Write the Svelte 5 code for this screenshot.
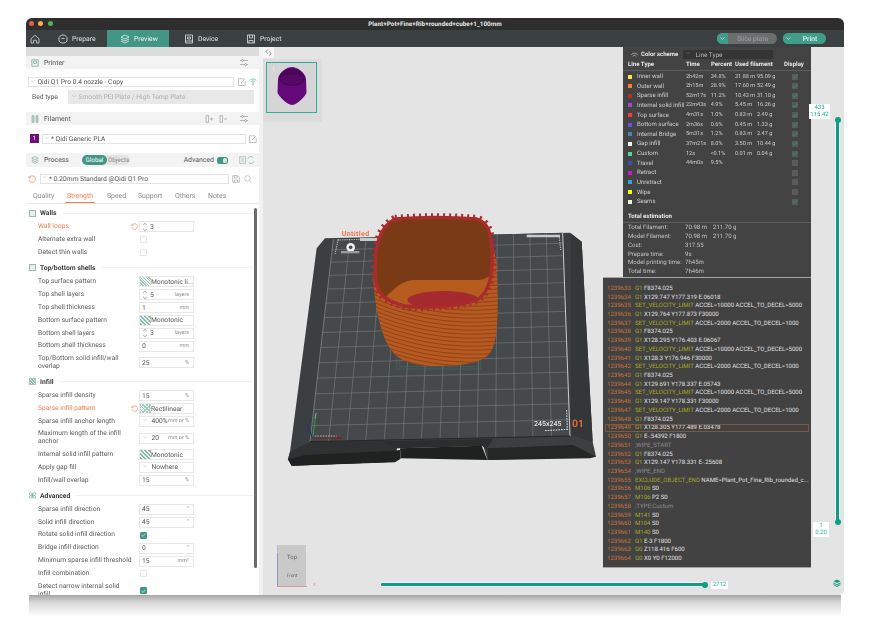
<script>
  const sections = [
    { title: 'Walls', icon: 'box', rows: [
      { label: 'Wall loops', val: '3', spin: true, mod: true },
      { label: 'Alternate extra wall', check: false },
      { label: 'Detect thin walls', check: false }
    ]},
    { title: 'Top/bottom shells', icon: 'box', rows: [
      { label: 'Top surface pattern', val: 'Monotonic li...', hatch: 'a' },
      { label: 'Top shell layers', val: '5', spin: true, unit: 'layers' },
      { label: 'Top shell thickness', val: '1', unit: 'mm' },
      { label: 'Bottom surface pattern', val: 'Monotonic', hatch: 'b' },
      { label: 'Bottom shell layers', val: '3', spin: true, unit: 'layers' },
      { label: 'Bottom shell thickness', val: '0', unit: 'mm' },
      { label: 'Top/Bottom solid infill/wall overlap', val: '25', unit: '%', two: true }
    ]},
    { title: 'Infill', icon: 'hatch', rows: [
      { label: 'Sparse infill density', val: '15', unit: '%' },
      { label: 'Sparse infill pattern', val: 'Rectilinear', hatch: 'c', mod: true },
      { label: 'Sparse infill anchor length', val: '400%', drop: true, unit: 'mm or %' },
      { label: 'Maximum length of the infill anchor', val: '20', drop: true, unit: 'mm or %', two: true },
      { label: 'Internal solid infill pattern', val: 'Monotonic', hatch: 'b' },
      { label: 'Apply gap fill', val: 'Nowhere', drop: true },
      { label: 'Infill/wall overlap', val: '15', unit: '%' }
    ]},
    { title: 'Advanced', icon: 'atom', rows: [
      { label: 'Sparse infill direction', val: '45', unit: '°' },
      { label: 'Solid infill direction', val: '45', unit: '°' },
      { label: 'Rotate solid infill direction', check: true },
      { label: 'Bridge infill direction', val: '0', unit: '°' },
      { label: 'Minimum sparse infill threshold', val: '15', unit: 'mm²' },
      { label: 'Infill combination', check: false },
      { label: 'Detect narrow internal solid infill', check: true, two: true }
    ]}
  ];
  const legend = [
    ['#ffe640','Inner wall','2h42m','34.8%','31.88 m','95.09 g',true],
    ['#ff7d38','Outer wall','2h15m','28.9%','17.60 m','52.49 g',true],
    ['#b03029','Sparse infill','52m17s','11.2%','10.43 m','31.10 g',true],
    ['#9a4bd0','Internal solid infill','22m43s','4.9%','5.45 m','16.26 g',true],
    ['#f93a3a','Top surface','4m31s','1.0%','0.83 m','2.49 g',true],
    ['#6a50e0','Bottom surface','2m36s','0.6%','0.45 m','1.33 g',true],
    ['#4d80ba','Internal Bridge','5m31s','1.2%','0.83 m','2.47 g',true],
    ['#ffffff','Gap infill','37m21s','8.0%','3.50 m','10.44 g',true],
    ['#5ed194','Custom','12s','<0.1%','0.01 m','0.04 g',true],
    ['#384fb2','Travel','44m0s','9.5%','','',false],
    ['#cd17cd','Retract','','','','',false],
    ['#31a6d0','Unretract','','','','',false],
    ['#ffff00','Wipe','','','','',false],
    ['#eeeeee','Seams','','','','',true]
  ];
  const totals = [
    ['Total Filament:','70.98 m','211.70 g'],
    ['Model Filament:','70.98 m','211.70 g'],
    ['Cost:','317.55',''],
    ['Prepare time:','9s',''],
    ['Model printing time:','7h45m',''],
    ['Total time:','7h46m','']
  ];
  const gcode = [
    ['G1','F8374.025'],['G1','X129.747 Y177.319 E.06018'],
    ['SET_VELOCITY_LIMIT','ACCEL=10000 ACCEL_TO_DECEL=5000'],['G1','X129.764 Y177.873 F30000'],
    ['SET_VELOCITY_LIMIT','ACCEL=2000 ACCEL_TO_DECEL=1000'],['G1','F8374.025'],
    ['G1','X128.295 Y176.403 E.06067'],['SET_VELOCITY_LIMIT','ACCEL=10000 ACCEL_TO_DECEL=5000'],
    ['G1','X128.3 Y176.946 F30000'],['SET_VELOCITY_LIMIT','ACCEL=2000 ACCEL_TO_DECEL=1000'],
    ['G1','F8374.025'],['G1','X129.691 Y178.337 E.05743'],
    ['SET_VELOCITY_LIMIT','ACCEL=10000 ACCEL_TO_DECEL=5000'],['G1','X129.147 Y178.331 F30000'],
    ['SET_VELOCITY_LIMIT','ACCEL=2000 ACCEL_TO_DECEL=1000'],['G1','F8374.025'],
    ['G1','X128.305 Y177.489 E.03478'],['G1','E-.54392 F1800'],
    [';WIPE_START',''],['G1','F8374.025'],['G1','X129.147 Y178.331 E-.25608'],
    [';WIPE_END',''],['EXCLUDE_OBJECT_END','NAME=Plant_Pot_Fine_Rib_rounded_c...'],
    ['M106','S0'],['M106','P2 S0'],[';TYPE:Custom',''],['M141','S0'],['M104','S0'],['M140','S0'],
    ['G1','E-3 F1800'],['G0','Z118.416 F600'],['G0','X0 Y0 F12000']
  ];
  const tabs = ['Quality','Strength','Speed','Support','Others','Notes'];

  const TL=[160,118],TR=[848,98],BR=[870,708],BL=[90,725];
  const lerp=(a,b,t)=>[a[0]+(b[0]-a[0])*t,a[1]+(b[1]-a[1])*t];
  const grid=[];
  const N=14;
  for(let i=1;i<N;i++){
    const t=i/N;
    grid.push([lerp(TL,TR,t),lerp(BL,BR,t)]);
    const s=Math.pow(t,1.12);
    grid.push([lerp(TL,BL,s),lerp(TR,BR,s)]);
  }
  const ribs=[];
  for(let y=120;y<560;y+=12){
    ribs.push(`M270,${y-70} C360,${y-30} 500,${y+8} 665,${y-10}`);
  }
  const body='M280,235 C285,340 310,420 332,447 C352,482 400,498 470,498 C540,498 600,490 625,465 C650,440 653,380 653,300 L650,190 L632,110 L300,110 Z';
  const rim='M345,57 Q470,47 590,57 C625,67 634,95 636,170 C639,235 622,282 590,300 C530,322 420,325 375,318 C320,305 290,285 286,230 C284,150 292,82 345,57 Z';
</script>

<div class="frame">
<div class="window">
  <div class="titlebar">
    <div class="lights"><i class="r"></i><i class="y"></i><i class="g"></i></div>
    <div class="wintitle">Plant+Pot+Fine+Rib+rounded+cube+1_100mm</div>
  </div>
  <div class="nav">
    <div class="home">
      <svg width="10" height="10" viewBox="0 0 10 10" fill="none" stroke="#d5d8d8" stroke-width=".8"><path d="M1 4.8 5 1.2l4 3.6V9H6.4V6.2H3.6V9H1z"/></svg>
    </div>
    <div class="navtab prep">
      <svg width="10" height="10" viewBox="0 0 10 10" fill="none" stroke="#dfe2e2" stroke-width=".8"><path d="M1 3.5C2 1.8 3.5 1 5 1s3 .8 4 2.5V7C8 8.5 6.5 9 5 9S2 8.5 1 7z"/><path d="M3.5 4.5h3"/></svg>
      <span>Prepare</span>
    </div>
    <div class="navtab active">
      <svg width="10" height="10" viewBox="0 0 10 10" fill="none" stroke="#e8f3f0" stroke-width=".8"><path d="M5 1 9 3 5 5 1 3zM1 5l4 2 4-2M1 7l4 2 4-2"/></svg>
      <span>Preview</span>
    </div>
    <div class="navtab dev">
      <svg width="10" height="10" viewBox="0 0 10 10" fill="none" stroke="#dfe2e2" stroke-width=".8"><path d="M1.5 1h7v8h-7zM3.5 3h3v2h-3zM1.5 7h7"/></svg>
      <span>Device</span>
    </div>
    <div class="navtab proj">
      <svg width="10" height="10" viewBox="0 0 10 10" fill="none" stroke="#dfe2e2" stroke-width=".8"><path d="M1.5 1h7v8h-7zM3.5 1v3h3V1M3 9V6.5h4V9"/></svg>
      <span>Project</span>
    </div>
    <div class="actions">
      <div class="btn slice"><b><svg width="5" height="3" viewBox="0 0 5 3" fill="none" stroke="#dff" stroke-width=".6"><path d="M.5.5 2.5 2.3 4.5.5"/></svg></b><span>Slice plate</span></div>
      <div class="btn print"><b><svg width="5" height="3" viewBox="0 0 5 3" fill="none" stroke="#dff" stroke-width=".6"><path d="M.5.5 2.5 2.3 4.5.5"/></svg></b><span>Print</span></div>
    </div>
  </div>

  <div class="main">
    <aside class="side">
      <div class="strip"></div>
      <div class="head">
        <svg class="hicon" width="8" height="8" viewBox="0 0 8 8" fill="none" stroke="#7fa89f" stroke-width=".8"><path d="M.8.8h6.4v6.4H.8zM2.5 2h3v2.4h-3z"/></svg>
        <span>Printer</span>
        <svg class="tune" width="8" height="7" viewBox="0 0 8 7" fill="none" stroke="#8a8f8f" stroke-width=".6"><path d="M0 1.5h8M0 5.5h8"/><circle cx="2.5" cy="1.5" r="1" fill="#fff"/><circle cx="5.5" cy="5.5" r="1" fill="#fff"/></svg>
      </div>
      <div class="pbody">
        <div class="selrow">
          <div class="sel"><em>﹀</em>Qidi Q1 Pro 0.4 nozzle - Copy</div>
          <svg width="8" height="8" viewBox="0 0 8 8" fill="none" stroke="#999" stroke-width=".6"><path d="M.5.8h5.5M.5.8v6.7h6.7V3M3 5l4-4"/></svg>
          <svg width="8" height="8" viewBox="0 0 8 8" fill="none" stroke="#5aa897" stroke-width=".7"><path d="M.6 2.4C3 .6 5 .6 7.4 2.4M1.8 3.8C3.3 2.7 4.7 2.7 6.2 3.8M3 5.2C3.7 4.7 4.3 4.7 5 5.2M4 5.8v2"/></svg>
        </div>
        <div class="bedrow">
          <span>Bed type</span>
          <div class="bedsel"><em>﹀</em>Smooth PEI Plate / High Temp Plate</div>
        </div>
      </div>
      <div class="head">
        <svg class="hicon" width="8" height="8" viewBox="0 0 8 8" fill="#bcd3cd" stroke="#7fa89f" stroke-width=".6"><path d="M1 .7h2v6.6H1zM5 .7h2v6.6H5z"/></svg>
        <span>Filament</span>
        <svg class="fa" width="8" height="8" viewBox="0 0 8 8" fill="none" stroke="#8a8f8f" stroke-width=".6"><path d="M1 .7h2.6v6.6H1zM5 4h3M6.5 2.5v3"/></svg>
        <svg class="fb" width="8" height="8" viewBox="0 0 8 8" fill="none" stroke="#8a8f8f" stroke-width=".6"><path d="M1 .7h2.6v6.6H1zM5 4h3"/></svg>
        <svg class="tune" width="8" height="7" viewBox="0 0 8 7" fill="none" stroke="#8a8f8f" stroke-width=".6"><path d="M0 1.5h8M0 5.5h8"/><circle cx="2.5" cy="1.5" r="1" fill="#fff"/><circle cx="5.5" cy="5.5" r="1" fill="#fff"/></svg>
      </div>
      <div class="fbody">
        <i class="swatch">1</i>
        <div class="sel"><em>﹀</em>* Qidi Generic PLA</div>
        <svg width="8" height="8" viewBox="0 0 8 8" fill="none" stroke="#999" stroke-width=".6"><path d="M.5.8h5.5M.5.8v6.7h6.7V3M3 5l4-4"/></svg>
      </div>
      <div class="head proc">
        <svg class="hicon" width="8" height="8" viewBox="0 0 8 8" fill="none" stroke="#7fa89f" stroke-width=".7"><path d="M4 .6 7.2 2.2 4 3.8.8 2.2zM.8 4 4 5.6 7.2 4M.8 5.6 4 7.3l3.2-1.7"/></svg>
        <span>Process</span>
        <div class="seg"><b>Global</b><u>Objects</u></div>
        <span class="adv">Advanced</span>
        <i class="switch"></i>
        <svg width="16" height="8" viewBox="0 0 16 8" fill="none" stroke="#8aa" stroke-width=".6"><path d="M.7.7h6v6.6h-6zM2.2 3h3M2.2 5h3"/><path d="M9 2.5a3 3 0 0 1 5-1M15 5.5a3 3 0 0 1-5 1" stroke="#5aa897"/></svg>
      </div>
      <div class="preset">
        <svg width="8" height="8" viewBox="0 0 8 8" fill="none" stroke="#f08050" stroke-width=".7"><path d="M1.3 2.6A3.2 3.2 0 1 1 1 4.6M1 .9v1.9h1.9"/></svg>
        <div class="sel"><em>﹀</em>* 0.20mm Standard @Qidi Q1 Pro</div>
        <svg width="8" height="8" viewBox="0 0 8 8" fill="none" stroke="#999" stroke-width=".6"><path d="M.7.7h5l1.6 1.6v5H.7zM2.3.7v2.2h3V.7M2.3 7.3V5h3.4v2.3"/></svg>
        <svg width="8" height="8" viewBox="0 0 8 8" fill="none" stroke="#aaa" stroke-width=".6"><circle cx="3.5" cy="3.5" r="2.8"/><path d="M5.6 5.6 7.6 7.6"/></svg>
      </div>
      <div class="ptabs">
        {#each tabs as t, i}<span class:on={i === 1}>{t}</span>{/each}
      </div>
      <div class="settings">
        <i class="thumb"></i>
        {#each sections as s}
          <section>
            <h4>
              {#if s.icon === 'box'}<i class="sbox"></i>
              {:else if s.icon === 'hatch'}<i class="sbox hatchy"></i>
              {:else}<svg class="atom" width="9" height="9" viewBox="0 0 9 9" fill="none" stroke="#6faa9c" stroke-width=".6"><ellipse cx="4.5" cy="4.5" rx="4" ry="1.5" transform="rotate(35 4.5 4.5)"/><ellipse cx="4.5" cy="4.5" rx="4" ry="1.5" transform="rotate(-35 4.5 4.5)"/><circle cx="4.5" cy="4.5" r=".8" fill="#6faa9c"/></svg>{/if}
              <span>{s.title}</span><hr />
            </h4>
            {#each s.rows as r}
              <div class="row" class:two={r.two}>
                <span class="lbl" class:mod={r.mod}>{r.label}</span>
                <span class="reset">
                  {#if r.mod}<svg width="7" height="7" viewBox="0 0 8 8" fill="none" stroke="#f08050" stroke-width=".7"><path d="M1.3 2.6A3.2 3.2 0 1 1 1 4.6M1 .9v1.9h1.9"/></svg>{/if}
                </span>
                {#if r.check !== undefined}
                  <i class="ck" class:checked={r.check}>{#if r.check}<svg width="5" height="4" viewBox="0 0 5 4" fill="none" stroke="#dff" stroke-width=".7"><path d="M.5 2 2 3.4 4.5.6"/></svg>{/if}</i>
                {:else}
                  <div class="field" class:hatchf={r.hatch}>
                    {#if r.hatch}<i class="ph {r.hatch}"></i>
                    {:else if r.spin}<i class="spin"><s></s><s class="dn"></s></i>
                    {:else if r.drop}<em>﹀</em>{/if}
                    <span class="v">{r.val}</span>
                    {#if r.unit}<small>{r.unit}</small>{/if}
                  </div>
                {/if}
              </div>
            {/each}
          </section>
        {/each}
      </div>
    </aside>
    <div class="divider"></div>

    <div class="view">
      <div class="collapse"><svg width="7" height="7" viewBox="0 0 7 7" fill="none" stroke="#444" stroke-width=".6"><path d="M2.8 .6 .8 2.6 2.8 4.4M4.2 2.6l2 1.9-2 1.9"/></svg></div>
      <div class="thumbs">
        <div class="thumbcard">
          <span>1</span>
          <svg width="30" height="38" viewBox="0 0 30 38"><path d="M1 12 C2 5 10 0 15 0 C20 0 28 5 29 12 L29.5 26 C26 32 19 38 15 38 C11 38 4 32 .5 26Z" fill="#64087a"/><path d="M2 10 C5 4 10 1.5 15 1.5 C20 1.5 25 4 28 10 C28 16 22 19 15 19 C8 19 2 16 2 10 Z" fill="#4a0659"/><path d="M3 11 C8 6 22 6 27 11 C26 16 21 18 15 18 C9 18 4 16 3 11Z" fill="#560768"/></svg>
        </div>
      </div>

      <svg class="scene" width="330" height="280" viewBox="0 0 990 840">
        <defs>
          <clipPath id="bodyclip"><path d={body}/></clipPath>
          <clipPath id="innerclip"><path d={rim}/></clipPath>
        </defs>
        <path d="M135,115 870,98 905,125 938,725 948,770 622,780 610,738 350,745 345,785 35,797 24,778 30,755 110,145Z" fill="#3b3f41"/>
        <path d="M30,755 90,725 335,722 350,745 345,785 35,797 24,778Z" fill="#2f3233"/>
        <path d="M35,797 24,778 75,765 340,752 360,750 362,776 345,787Z" fill="#202222"/>
        <path d="M360,745 605,737 622,780 362,775Z" fill="#1f2121"/>
        <path d="M622,745 880,735 948,770 930,775 625,780Z" fill="#252727"/>
        <path d="M310,724 640,716 620,746 605,737 345,745Z" fill="#2b2e2f"/>
        <path d="M872,100 905,125 938,725 872,705Z" fill="#333738"/>
        <polygon points="160,118 848,98 870,708 90,725" fill="#45494b"/>
        {#each grid as g}
          <line x1={g[0][0]} y1={g[0][1]} x2={g[1][0]} y2={g[1][1]} stroke="#8e9394" stroke-width="1.3"/>
        {/each}
        <line x1="848" y1="98" x2="870" y2="708" stroke="#e6e8e8" stroke-width="2.5"/>
        <line x1="160" y1="118" x2="90" y2="725" stroke="#a8acad" stroke-width="1.5"/>
        <line x1="90" y1="725" x2="870" y2="708" stroke="#1f2121" stroke-width="2.5"/>
        <path d="M175,118 165,162" stroke="#fff" stroke-width="2" stroke-dasharray="4 3" fill="none"/>
        <path d="M240,114H292V123H240ZM740,104H840V112H740Z" fill="#c8cbcb"/>
        <path d="M172,120 240,118M838,112 842,150" stroke="#fff" stroke-width="2" stroke-dasharray="4 3" fill="none"/>
        <path d="M860,630 862,690M795,692 862,688" stroke="#fff" stroke-width="2.5" stroke-dasharray="5 3" fill="none"/>
        <circle cx="212" cy="142" r="13" fill="#f0f0f0"/><circle cx="212" cy="142" r="5.5" fill="#45494b"/>
        <rect x="183" y="153" width="55" height="7" fill="#9a9d9e"/>
        <text x="185" y="107" class="untitled">Untitled</text>
        <text x="762" y="679" class="size">245x245</text>
        <text x="876" y="682" class="plate">01</text>
        <path d="M350,478V507H602V478M358,478V500H594V478" fill="none" stroke="#3f8a6f" stroke-width="1"/>
        <path d="M98,714 108,640" stroke="#2fae4a" stroke-width="2.5"/><path d="M105,655 108,640" stroke="#fff" stroke-width="2" stroke-dasharray="3 3"/>
        <path d="M98,714 80,672" stroke="#20208a" stroke-width="2.5"/>
        <path d="M98,714H185" stroke="#8a1c1c" stroke-width="2.5"/><path d="M172,709 190,714 172,718Z" fill="#8a1c1c"/>
        <path d="M104,708H170" stroke="#fff" stroke-width="1.6" stroke-dasharray="5 3"/>

        <path d={body} fill="#b85a20"/>
        <g clip-path="url(#bodyclip)">
          {#each ribs as d}<path {d} fill="none" stroke="#84401a" stroke-width="2.6"/>{/each}
        </g>
        <path d={rim} fill="none" stroke="#ab2e2c" stroke-width="25" stroke-dasharray="6 12"/>
        <path d={rim} fill="#7b3a16"/>
        <g clip-path="url(#innerclip)">
          <path d="M300,330V300C340,280 350,245 400,240H580C600,240 615,240 632,225V330Z" fill="#b65c1f"/>
          <ellipse cx="490" cy="300" rx="108" ry="27" fill="#a52a2f"/>
        </g>
        <path d={rim} fill="none" stroke="#a92c2c" stroke-width="10"/>
      </svg>

      <div class="cube">
        <div class="face"><span>Top</span><span class="fr">Front</span></div>
        <i class="axy"></i><i class="axx"></i><em>X</em>
      </div>

      <div class="legend">
        <div class="scheme">
          <svg width="7" height="5" viewBox="0 0 7 5" fill="none" stroke="#ddd" stroke-width=".6"><path d="M.3 3C1.5 .5 5.5 .5 6.7 3M1.8 4.5C2.5 3 4.5 3 5.2 4.5"/></svg>
          <b>Color scheme</b>
          <div class="schemesel"><em>﹀</em>Line Type</div>
        </div>
        <div class="lrow lhead"><span class="nm">Line Type</span><span>Time</span><span>Percent</span><span class="uf">Used filament</span><span class="dsp">Display</span></div>
        {#each legend as l}
          <div class="lrow">
            <i class="lsw" style="background:{l[0]}"></i>
            <span>{l[1]}</span><span class="num">{l[2]}</span><span class="num">{l[3]}</span><span class="num">{l[4]}</span><span class="num">{l[5]}</span>
            <i class="lck">{#if l[6]}<svg width="6" height="5" viewBox="0 0 6 5" fill="none" stroke="#1f9e8a" stroke-width=".9"><path d="M.6 2.4 2.3 4 5.4.8"/></svg>{/if}</i>
          </div>
        {/each}
        <div class="test">Total estimation</div>
        {#each totals as t}
          <div class="trow"><span>{t[0]}</span><span>{t[1]}</span><span>{t[2]}</span></div>
        {/each}
      </div>

      <div class="gcode">
        {#each gcode as g, i}
          <div class="gl" class:cur={1239633 + i === 1239649}>
            <span class="n">{1239633 + i}</span>
            {#if g[0].startsWith(';')}<span class="c">{g[0]}</span>
            {:else}<span class="k">{g[0]}</span><span class="a">{g[1]}</span>{/if}
          </div>
        {/each}
      </div>

      <div class="vtrack"></div>
      <i class="knob vk1"></i><i class="knob vk2"></i>
      <div class="tag t1">433<br />115.42</div>
      <div class="tag t2">1<br />0.20</div>
      <div class="htrack"></div>
      <i class="knob hk"></i>
      <div class="tag t3">2712</div>
      <svg class="layers" width="8" height="8" viewBox="0 0 8 8" fill="#1a9b88"><path d="M4 .4 7.6 2.2 4 4 .4 2.2zM.6 3.6 4 5.3l3.4-1.7.3.9L4 6.3.3 4.5zM.6 5.3 4 7l3.4-1.7.2.8L4 7.9.4 6.1z"/></svg>
    </div>
  </div>
</div>
<div class="under"></div>
</div>

<style>
  :global(html), :global(body) { margin: 0; background: #fff; }
  .frame { margin: 18px 26px 0; width: 818px; }
  .under { height: 22px; margin: 0 3px; background: linear-gradient(#a6a6a6, #d9d9d9 35%, #ffffff); }
  .window {
    position: relative; width: 818px; height: 577px;
    border-radius: 6px; overflow: hidden; display: flex; flex-direction: column;
    font-family: "Roboto", "Liberation Sans", sans-serif; color: #3a3a3a;
    font-size: 6.7px; text-rendering: geometricPrecision;
    filter: blur(.3px);
  }
  .titlebar { height: 12px; background: #2e2e2e; position: relative; display: flex; align-items: center; justify-content: center; flex: none; }
  .lights { position: absolute; left: 3px; top: 1px; display: flex; gap: 4.4px; }
  .lights i { width: 5px; height: 5px; border-radius: 50%; display: block; margin-top: 2px; }
  .r { background: #ee5d50; } .y { background: #f4b63e; } .g { background: #47b954; }
  .wintitle { color: #e8e8e8; font-weight: 700; font-size: 6.3px; letter-spacing: .05px; }
  .nav { height: 17px; background: #3b4143; display: flex; align-items: stretch; color: #dfe2e2; flex: none; font-size: 6.8px; }
  .home { width: 18px; display: flex; align-items: center; justify-content: center; }
  .navtab { display: flex; align-items: center; gap: 4px; }
  .prep { width: 63px; padding-left: 14px; box-sizing: border-box; }
  .active { width: 62px; background: #419686; color: #eef6f4; justify-content: flex-start; padding-left: 13px; box-sizing: border-box; }
  .dev { width: 62px; padding-left: 15px; box-sizing: border-box; }
  .proj { width: 60px; padding-left: 15px; box-sizing: border-box; }
  .actions { margin-left: auto; display: flex; gap: 6px; align-items: center; padding-right: 18px; }
  .btn { height: 11px; border-radius: 6px; display: flex; overflow: hidden; align-items: center; }
  .btn b { width: 11px; height: 11px; background: #3f9d8a; display: flex; align-items: center; justify-content: center; }
  .btn span { display: flex; align-items: center; justify-content: center; height: 100%; }
  .slice { width: 60px; background: #6c6e6e; }
  .slice span { flex: 1; color: #9ea0a0; }
  .print { width: 43px; background: #3f9d8a; }
  .print span { flex: 1; color: #e6f3f0; font-weight: 500; }

  .main { flex: 1; display: flex; min-height: 0; background: #e4e4e4; }
  .side { width: 233px; background: #fff; display: flex; flex-direction: column; flex: none; overflow: hidden; }
  .strip { height: 9px; background: #dcdcdc; flex: none; }
  .head { height: 13px; background: #f3f3f3; display: flex; align-items: center; padding-left: 5px; gap: 5px; position: relative; flex: none; color: #555; font-size: 6.9px; }
  .hicon { flex: none; }
  .tune { position: absolute; right: 11px; top: 3px; }
  .fa { position: absolute; right: 46px; top: 3px; } .fb { position: absolute; right: 32px; top: 3px; }
  .pbody { height: 43px; flex: none; box-sizing: border-box; padding: 8px 0 0 2px; }
  .selrow { display: flex; align-items: center; gap: 1.5px; }
  .selrow .sel { width: 206px; height: 10px; }
  .selrow svg { margin-left: 2px; }
  .sel { border: 1px solid #e2e2e2; box-sizing: border-box; display: flex; align-items: center; color: #555; background: #fff; white-space: nowrap; }
  em { font-style: normal; font-size: 4.5px; color: #888; margin: 0 2px 0 2px; }
  .bedrow { display: flex; align-items: center; margin-top: 3px; padding-left: 4px; height: 14px; }
  .bedrow > span { width: 36px; color: #555; }
  .bedsel { width: 186px; height: 14px; background: #e8e8e8; color: #aeaeae; display: flex; align-items: center; padding-left: 2px; box-sizing: border-box; }
  .fbody { height: 28px; flex: none; box-sizing: border-box; padding: 9px 0 0 4px; display: flex; align-items: flex-start; gap: 2.5px; }
  .swatch { width: 9px; height: 9px; background: #6e0f7e; color: #fff; font-style: normal; font-size: 6px; display: flex; align-items: center; justify-content: center; }
  .fbody .sel { width: 204px; height: 10px; }
  .fbody svg { margin: 1px 0 0 1px; }
  .proc { height: 14px; }
  .seg { display: flex; height: 10px; border-radius: 5px; background: #e4e4e4; margin-left: 8px; width: 48px; font-size: 6.3px; }
  .seg b { width: 25px; background: #419686; color: #fff; border-radius: 5px; font-weight: 400; display: flex; align-items: center; justify-content: center; }
  .seg u { text-decoration: none; color: #888; display: flex; align-items: center; padding-left: 1px; }
  .adv { margin-left: auto; margin-right: -2px; color: #555; }
  .switch { width: 11px; height: 7px; border-radius: 2.5px; background: #419686; position: relative; margin-right: 7px; }
  .switch::after { content: ''; position: absolute; right: 1px; top: 1px; width: 4px; height: 5px; background: #cfe5df; border-radius: 1.5px; }
  .proc > svg:last-child { margin-right: 4px; margin-left: -1px; }
  .preset { height: 9px; margin-top: 7px; padding-left: 2px; display: flex; align-items: center; gap: 3.5px; flex: none; }
  .preset .sel { width: 189px; height: 10px; }
  .ptabs { height: 14px; margin-top: 6px; border-bottom: 1px solid #e8e8e8; flex: none; color: #888; font-size: 6.9px; position: relative; }
  .ptabs span { padding: 0 2px; height: 13px; display: flex; align-items: center; position: absolute; top: 0; }
  .ptabs span:nth-child(1) { left: 5px; } .ptabs span:nth-child(2) { left: 39px; color: #ef7d4f; border-bottom: 1px solid #ef7d4f; }
  .ptabs span:nth-child(3) { left: 79px; } .ptabs span:nth-child(4) { left: 110px; }
  .ptabs span:nth-child(5) { left: 147px; } .ptabs span:nth-child(6) { left: 180px; }

  .settings { flex: 1; overflow: hidden; padding-top: 1.5px; position: relative; min-height: 0; }
  .thumb { position: absolute; left: 228px; top: 4px; width: 3px; height: 360px; background: #6b6b6b; border-radius: 2px; }
  section { margin-bottom: 1.2px; }
  h4 { margin: 0; height: 15px; display: flex; align-items: center; gap: 4px; padding-left: 3px; font-size: 6.8px; font-weight: 700; color: #3d3d3d; }
  h4 hr { flex: 1; border: 0; border-top: 1px solid #f1f1f1; margin: 0 6px 0 2px; }
  .sbox { width: 7px; height: 7px; display: block; border: 1px solid #9bb7b0; background: #e8efed; box-sizing: border-box; }
  .atom { margin-left: -1px; margin-right: -1px; }
  .hatchy { background: repeating-linear-gradient(45deg, #93b9af 0 1px, #e5efec 1px 2px); border-color: #a9c6be; }
  .row { height: 12.9px; display: grid; grid-template-columns: 89px 12px 55px; padding-left: 12px; align-items: center; color: #5a5a5a; }
  .row.two { height: 20.3px; }
  .lbl { line-height: 7.6px; white-space: nowrap; }
  .two .lbl { white-space: normal; padding-right: 4px; }
  .mod { color: #ef7d4f; }
  .reset { display: flex; justify-content: center; margin-left: 3px; }
  .ck { width: 7px; height: 7px; border: 1px solid #e5e5e5; border-radius: 1px; box-sizing: border-box; display: flex; align-items: center; justify-content: center; margin-left: .5px; }
  .checked { background: #419686; border-color: #419686; }
  .field { height: 11px; border: 1px solid #e8e8e8; box-sizing: border-box; display: flex; align-items: center; padding: 0 2px; position: relative; background: #fff; }
  .field .v { flex: none; white-space: nowrap; color: #555; }
  .field small { margin-left: auto; font-size: 5.4px; color: #8a8a8a; padding-right: 2px; white-space: nowrap; }
  .hatchf { padding-left: 0; }
  .ph { width: 11px; height: 9px; flex: none; display: block; }
  .ph.a { background: repeating-linear-gradient(45deg, #a8c6be 0 1px, #eef5f3 1px 2px); }
  .ph.b { background: repeating-linear-gradient(45deg, #8fb9ae 0 1.5px, #e4f1ee 1.5px 3px); }
  .ph.c { background: repeating-linear-gradient(135deg, #a8cbc2 0 1px, transparent 1px 2.5px), repeating-linear-gradient(45deg, #a8cbc2 0 1px, #e8f2ef 1px 2.5px); }
  .spin { width: 5px; height: 8px; display: block; margin-right: 3px; position: relative; }
  .spin s { position: absolute; left: .5px; top: 0; width: 3px; height: 3px; border-left: .5px solid #aaa; border-top: .5px solid #aaa; transform: rotate(45deg) scale(.8); }
  .spin s.dn { top: 4px; transform: rotate(225deg) scale(.8); }
  .field em { margin: 0 4px 0 1px; }

  .divider { width: 4px; background: #f2f2f2; flex: none; }
  .view { flex: 1; position: relative; background: #e4e4e4; overflow: hidden; }
  .collapse { position: absolute; left: 0; top: 0; width: 11px; height: 11px; background: #f6f6f6; display: flex; align-items: center; justify-content: center; }
  .thumbs { position: absolute; left: 0; top: 12px; width: 59px; height: 63px; background: #dcdcdc; padding: 3px; box-sizing: border-box; }
  .thumbcard { width: 51px; height: 51px; border: 1px solid #2fae9c; box-sizing: border-box; background: #d5d5d5; position: relative; display: flex; justify-content: center; padding-top: 4px; }
  .thumbcard span { position: absolute; left: 5px; top: 3px; color: #f0f0f0; font-size: 6px; }
  .scene { position: absolute; left: 17px; top: 153px; }
  .untitled { font: 700 21px "Roboto", sans-serif; fill: #f2734f; letter-spacing: 1.2px; }
  .size { font: 500 21px "Roboto", sans-serif; fill: #e6e6e6; }
  .plate { font: 700 31px "Roboto", sans-serif; fill: #e8663d; }
  .cube { position: absolute; left: 14px; top: 498px; width: 40px; height: 45px; }
  .face { position: absolute; left: 0; top: 0; width: 29px; height: 41px; background: #c9c9c9; border-left: 1px solid #b8bcc8; box-sizing: border-box; display: flex; flex-direction: column; align-items: center; color: #666; font-size: 6px; padding-top: 9px; }
  .face .fr { margin-top: 13px; font-size: 4.6px; }
  .axy { position: absolute; left: 0; top: 8px; height: 34px; width: 1px; background: #8b97c8; }
  .axx { position: absolute; left: 0; top: 41px; height: 1px; width: 30px; background: #d99a9a; }
  .cube em { position: absolute; left: 36px; top: 38px; font-size: 4.5px; margin: 0; color: #d99a9a; }

  .legend { position: absolute; left: 360px; top: 0; width: 188px; height: 230px; box-sizing: border-box; background: #434343; color: #cfcfcf; font-size: 6.05px; }
  .scheme { height: 14px; display: flex; align-items: center; padding-left: 6px; color: #e8e8e8; }
  .scheme svg { margin-right: 3px; margin-left: 2px; }
  .scheme b { width: 42px; font-weight: 700; white-space: nowrap; font-size: 6px; }
  .schemesel { width: 90px; height: 9px; background: #343434; display: flex; align-items: center; color: #bbb; padding-left: 1px; box-sizing: border-box; margin-top: 1px; font-size: 6.4px; }
  .schemesel em { margin-right: 5px; margin-left: 2px; color: #aaa; }
  .lrow { height: 9.63px; display: grid; grid-template-columns: 9px 49px 24.7px 24.3px 22px 35px 10px; padding-left: 5px; align-items: center; white-space: nowrap; }
  .num { font-size: 5.55px; }
  .lhead { display: block; position: relative; border-bottom: 1px solid #5d5d5d; color: #e8e8e8; font-weight: 700; box-sizing: border-box; margin-bottom: 1px; height: 9.8px; }
  .lhead span { position: absolute; top: 0; }
  .lhead span:nth-child(1) { left: 5px; } .lhead span:nth-child(2) { left: 63px; }
  .lhead span:nth-child(3) { left: 88px; } .lhead span:nth-child(4) { left: 112px; }
  .lhead span:nth-child(5) { left: 161px; }
  .lsw { width: 4px; height: 4px; display: block; }
  .lck { width: 6px; height: 6px; background: #5a5a5a; display: flex; align-items: center; justify-content: center; }
  .test { margin-top: 5px; height: 9px; padding: 0 0 1px 5px; border-bottom: 1px solid #5d5d5d; color: #e8e8e8; font-weight: 700; display: flex; align-items: center; margin-bottom: 1px; }
  .trow { height: 8.75px; display: grid; grid-template-columns: 57px 28px 30px; padding-left: 5px; align-items: center; white-space: nowrap; color: #c4c4c4; }
  .gcode { position: absolute; left: 340px; top: 230px; width: 208px; height: 291px; box-sizing: border-box; background: #424242; border-top: 1px solid #a5a5a5; border-bottom: 1px solid #a5a5a5; padding-top: 6px; font-size: 6.05px; }
  .gl { height: 8.73px; display: flex; align-items: center; padding-left: 4px; white-space: nowrap; box-sizing: border-box; }
  .gl.cur { outline: 1px solid #7a5a44; outline-offset: -1px; margin: 0 2px; padding-left: 2px; }
  .n { width: 28px; color: #c6733c; flex: none; }
  .k { color: #a8a820; margin-right: 1.5px; }
  .a { color: #e0e0e0; }
  .c { color: #8c8c8c; }
  .vtrack { position: absolute; left: 572px; top: 72px; width: 3px; height: 402px; background: #0f9d86; border: 1px solid #f4f4f4; }
  .knob { position: absolute; width: 6px; height: 6px; border-radius: 50%; background: #0f9d86; display: block; }
  .vk1 { left: 571.5px; top: 70px; } .vk2 { left: 571.5px; top: 472px; }
  .tag { position: absolute; background: #fff; color: #1fae98; font-size: 6px; text-align: center; line-height: 7.4px; }
  .t1 { left: 546px; top: 57px; width: 21px; height: 15px; }
  .t2 { left: 550px; top: 475px; width: 16px; height: 15px; }
  .htrack { position: absolute; left: 117px; top: 535px; width: 324px; height: 3px; background: #0f9d86; border: 1px solid #f4f4f4; border-radius: 2px; }
  .hk { left: 439px; top: 534.5px; }
  .t3 { left: 448px; top: 534px; width: 17px; height: 8px; line-height: 8px; }
  .layers { position: absolute; left: 570px; top: 532px; }
</style>
